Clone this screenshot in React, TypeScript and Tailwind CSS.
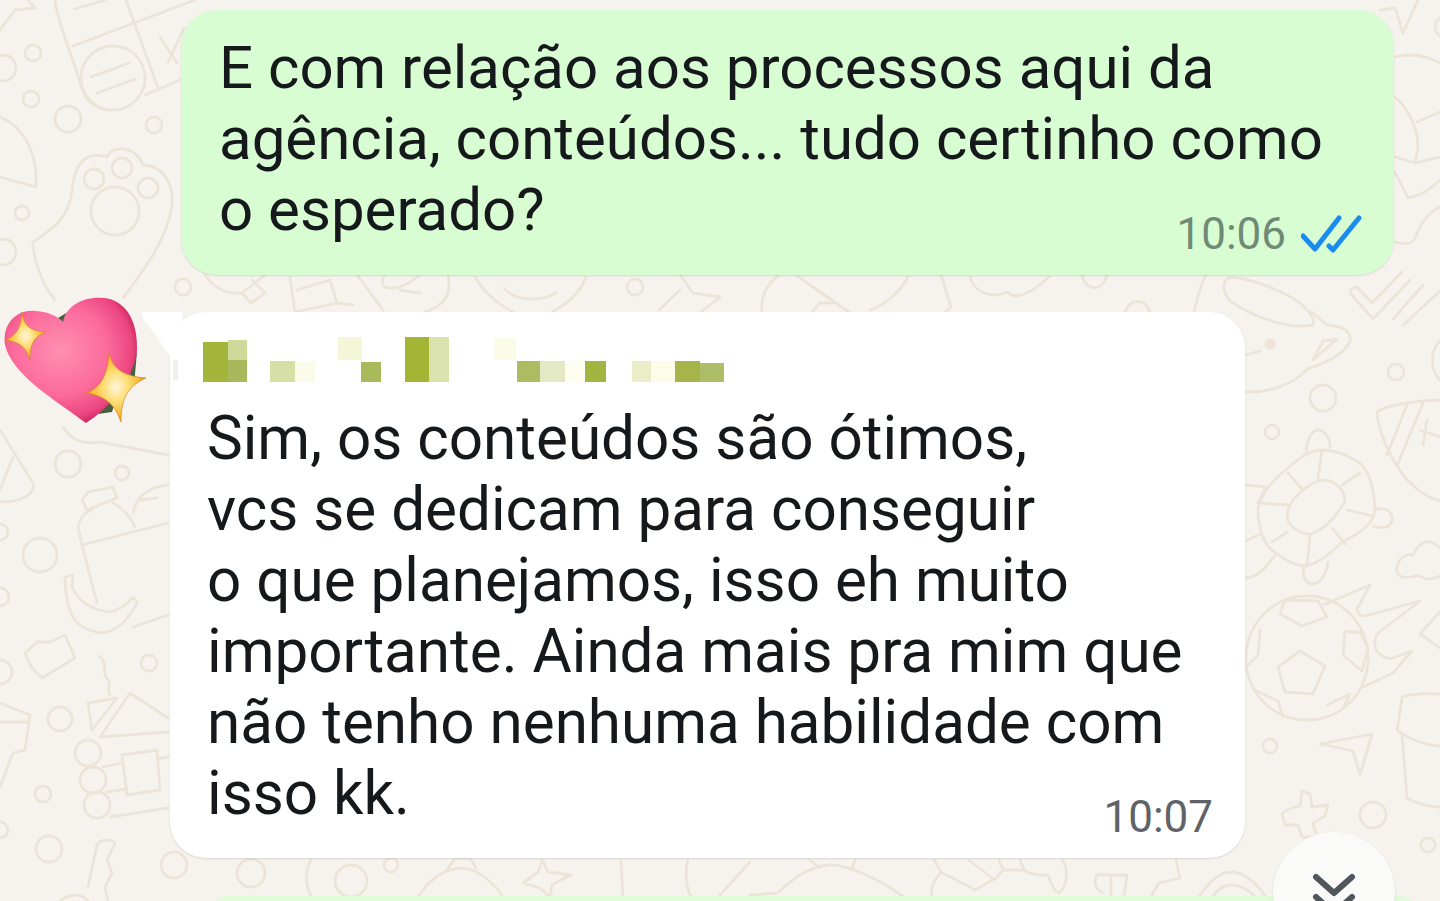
const nameBlocks = [
  [3, 23, 5, 20, '#f0f0ea'],
  [33, 5, 25, 40, '#a3b53b'],
  [58, 3, 19, 20, '#cfd99a'],
  [58, 23, 19, 22, '#a9b85a'],
  [100, 24, 25, 21, '#d5dfa6'],
  [125, 24, 20, 21, '#fafbe8'],
  [168, 0, 24, 23, '#f3f7d8'],
  [191, 25, 20, 20, '#a8ba5a'],
  [235, 0, 24, 45, '#a3b535'],
  [259, 0, 20, 45, '#dae2ae'],
  [324, 1, 22, 22, '#fbfce8'],
  [347, 24, 23, 21, '#adbc62'],
  [370, 24, 25, 21, '#e3e9c4'],
  [395, 24, 19, 21, '#fdfdf0'],
  [415, 24, 21, 21, '#a2b540'],
  [462, 24, 19, 21, '#e9eec8'],
  [481, 24, 24, 21, '#fcfce8'],
  [505, 24, 25, 21, '#a5b54a'],
  [530, 26, 24, 19, '#aebd68'],
] as const

const rings = [
  [33, 53, 8], [31, 99, 8], [68, 119, 13], [154, 125, 8], [22, 213, 7], [183, 287, 8], [3, 68, 13], [3, 252, 13],
  [68, 464, 13], [122, 473, 7], [40, 555, 17], [149, 663, 8], [60, 719, 12], [43, 794, 8], [49, 849, 13], [174, 865, 13],
  [0, 532, 8], [0, 597, 9], [0, 672, 12], [0, 830, 8], [1396, 372, 8], [1272, 432, 7], [1323, 398, 13], [1270, 746, 7],
  [1373, 815, 13], [1428, 845, 7], [1445, 27, 10], [113, 78, 32], [94, 179, 10], [122, 168, 10], [148, 188, 10],
  [115, 211, 24], [88, 753, 13], [93, 780, 13], [97, 805, 13], [635, 287, 8], [251, 873, 14], [351, 881, 16], [391, 865, 7],
]

const doodles = [
  // notebook, top left
  'M55 0C58 25 72 55 80 82C84 100 95 110 112 110M73 46L195 0M126 0L158 88M145 95L180 80M91 77L129 63M97 93L135 79M75 9L105 0M160 37L177 63M184 28L168 62',
  'M0 117C25 127 38 155 36 187L0 177M0 30L15 10L35 8L28 0',
  // paw
  'M33 242C33 258 42 285 55 300M33 242C55 228 70 215 72 190C74 165 85 150 107 157C112 145 135 145 143 165C160 165 174 180 172 205C168 240 140 275 123 298',
  // left edge, under the heart
  'M0 430L33 483C36 495 20 502 0 502M13 457L0 490M63 427C70 440 85 445 100 442L168 455',
  // bottle, bag, bread, banana
  'M82 500L88 492L113 487L117 498L87 510ZM78 527C80 518 85 512 92 510M113 503C122 508 130 516 135 527M78 527L82 545L97 603M82 545L168 523M133 513C136 498 147 487 168 485M140 500L157 498M168 615L133 627',
  'M65 577L73 575L72 587C78 600 90 610 110 612C120 610 128 603 133 597L137 602C133 613 125 620 123 623C112 632 105 633 100 633C88 630 80 627 75 620C68 612 65 590 65 577Z',
  // lego, smoke, house
  'M25 653L37 642L50 642L65 635L75 658L42 678L32 668Z',
  'M99 656C110 665 100 672 108 680C112 685 106 690 110 695',
  'M88 703L117 698L92 730ZM130 693L168 718M130 693L100 737M100 737L168 732M122 755L157 750L160 790L127 795ZM103 767L122 763M168 757L157 759M107 792L127 789M168 808L110 817',
  // ice cream, key
  'M0 703L30 715L25 750L13 753L0 787M0 722L27 722',
  'M88 887L97 845C100 838 115 840 115 843L107 860L112 873L105 887L108 901M60 901C70 893 82 893 88 901',
  // band under the first bubble
  'M205 275C215 290 230 295 242 293L265 275M242 293L251 303L265 293L252 280',
  'M290 277L295 312M297 290L330 280L337 303L353 305M295 312L337 303M357 275L383 310M385 275C375 290 395 295 420 275M400 290L420 293M448 275C452 295 445 305 425 312',
  'M475 277C485 295 500 305 513 312M586 277C580 295 565 305 552 312M504 288C515 302 545 302 556 292',
  'M680 275L693 293L720 297L701 312M680 290L659 310',
  'M779 275C765 285 760 300 762 312M796 275L850 313M908 277C900 292 885 305 870 310M812 312L820 303L833 303',
  'M941 275L951 307L945 312M970 277C975 295 995 298 1007 292C1015 300 1030 295 1049 277M1082 275C1085 292 1103 292 1107 275M1125 312C1130 298 1145 298 1150 312M1206 275C1200 285 1197 300 1194 312',
  // surfboard, cup, check
  'M1230 301C1255 318 1290 330 1313 325C1315 318 1310 312 1300 303C1285 292 1245 275 1228 278C1220 285 1225 295 1230 301',
  'M1245 392C1265 393 1295 385 1307 369C1320 365 1345 355 1350 341C1352 330 1340 326 1327 325L1312 312M1313 360L1337 339L1323 341ZM1245 355L1260 351',
  'M1351 294L1373 319L1410 280M1351 294C1348 290 1355 286 1358 288L1372 303L1402 272M1393 319L1423 285M1403 325L1440 291',
  // top right
  'M1380 10L1395 8L1403 33L1418 0M1395 57C1410 53 1425 55 1440 63M1395 97C1410 110 1418 130 1418 147L1415 163L1395 157M1417 122L1440 112M1415 163L1440 157M1395 172L1408 198C1420 196 1432 188 1440 180M1395 242C1405 245 1412 245 1415 238C1420 225 1428 212 1440 207M1440 341C1430 350 1430 370 1440 380',
  // hat
  'M1440 400C1415 401 1385 405 1377 412C1378 435 1400 490 1440 501M1423 403L1397 466M1407 405L1387 455M1420 430L1440 437M1427 420L1423 445',
  'M1440 548C1430 538 1420 540 1413 555C1400 552 1392 570 1400 576C1408 580 1415 575 1420 576C1428 582 1435 578 1440 576',
  // turtle
  'M1258 509C1258 530 1265 545 1273 551C1285 560 1295 566 1307 566C1320 562 1332 552 1340 544C1355 535 1375 525 1375 509C1374 490 1370 475 1363 466C1350 455 1335 450 1320 450C1305 452 1295 462 1287 469C1275 478 1262 490 1258 509Z',
  'M1287 516C1288 525 1298 534 1310 534C1320 532 1335 520 1345 501C1345 490 1335 480 1323 480C1310 482 1288 498 1287 516Z',
  'M1258 503L1288 505M1288 473L1302 489M1322 451L1318 478M1360 473L1342 485M1347 510L1373 516M1332 528L1345 544M1310 535L1307 566M1287 532L1272 542',
  'M1306 455C1306 440 1312 430 1318 430C1326 430 1331 440 1330 448M1377 509C1388 508 1392 512 1392 519C1392 526 1385 530 1373 526M1303 566C1303 578 1306 584 1312 584C1320 584 1326 575 1328 562M1246 485L1266 487L1258 503M1246 541L1260 534M1246 578C1258 578 1268 565 1275 555',
  // soccer ball, flames
  'M1246 658C1246 625 1272 596 1307 596C1342 596 1368 625 1368 658C1368 692 1342 720 1307 720C1272 720 1246 692 1246 658Z',
  'M1300 651L1325 666L1313 694L1285 692L1278 667ZM1280 614L1302 626L1327 617L1318 601L1285 600ZM1345 632L1343 655L1362 671L1368 648L1360 632ZM1260 630L1258 655L1247 666M1257 691L1278 701L1283 717M1327 705L1350 694L1343 708',
  'M1323 605L1370 585L1357 609C1358 615 1362 616 1365 616L1420 601L1377 634C1372 645 1375 655 1390 659L1412 651L1393 673L1363 687',
  // plane, cross
  'M1320 744L1372 734L1360 775L1353 751Z',
  'M1282 814C1285 810 1296 806 1300 806L1302 791L1310 794L1312 807L1328 805L1325 816L1313 823L1317 837L1302 837L1298 825L1285 825Z',
  // pot
  'M1440 694C1420 693 1402 695 1402 698L1397 730C1410 740 1425 745 1440 746M1402 734L1407 798C1415 803 1430 807 1440 807M1440 612L1420 634L1440 648',
  // band under the second bubble
  'M311 860C305 870 305 885 311 895M418 897C430 878 445 868 464 868C480 870 495 885 502 895M447 870L455 858L470 858L476 868',
  'M542 860L548 872L571 875L552 885L550 897L540 888L523 883L538 872ZM621 860L623 897M688 860C685 870 685 885 691 897M750 862L720 895',
  'M750 895L778 893C795 875 815 865 831 865C850 865 880 880 904 897M810 860L820 868M855 860L852 868',
  'M934 860L941 872C935 880 930 885 932 897M941 872L975 890L996 878L1003 870L1024 870C1030 875 1040 875 1048 875C1050 880 1052 890 1059 893C1066 888 1070 870 1062 860M969 860L992 878M999 860L1003 870M1020 860L1024 870',
  'M1127 875L1097 875C1094 880 1094 890 1104 893M1111 877L1111 897M1127 875L1124 897M1176 860L1180 878L1159 883L1152 895',
  'M1199 897C1210 880 1220 872 1231 872C1245 872 1258 885 1266 897M1213 897C1218 888 1225 885 1231 885C1240 885 1250 890 1255 897',
]

function Doodles() {
  return (
    <svg className="absolute inset-0" width="1440" height="901" fill="none" stroke="#ece4d9" strokeWidth="2.8" strokeLinecap="round" strokeLinejoin="round">
      {rings.map(([cx, cy, r]) => (
        <circle key={`${cx}-${cy}`} cx={cx} cy={cy} r={r} />
      ))}
      {doodles.map(d => (
        <path key={d} d={d} />
      ))}
      <circle cx="1270" cy="344" r="4" fill="#ece4d9" />
    </svg>
  )
}

function Heart() {
  return (
    <svg className="absolute left-0 top-[290px]" width="150" height="135" viewBox="0 290 150 135">
      <defs>
        <radialGradient id="heart" cx="0.42" cy="0.42" r="0.6">
          <stop offset="0" stopColor="#ff8fb3" />
          <stop offset="0.6" stopColor="#fb6a9b" />
          <stop offset="0.9" stopColor="#ec4580" />
          <stop offset="1" stopColor="#cf2a63" />
        </radialGradient>
        <radialGradient id="star" cx="0.5" cy="0.5" r="0.5">
          <stop offset="0" stopColor="#fff6dc" />
          <stop offset="0.4" stopColor="#ffdf7a" />
          <stop offset="0.8" stopColor="#f7b733" />
          <stop offset="1" stopColor="#dc8a1f" />
        </radialGradient>
      </defs>
      <path d="M58 318L68 312L72 332ZM128 368L137 352L134 385ZM98 414L118 392L112 412Z" fill="#44603c" />
      <path d="M86 423C55 400 12 375 5 345C2 322 18 309 36 311C48 312 58 316 63 322C66 305 85 296 104 298C125 300 138 320 137 350C135 378 110 408 86 423Z" fill="url(#heart)" />
      <path d="M22 312C24 326 30 331 46 332C33 337 30 345 30 360C26 347 20 342 5 340C17 336 21 327 22 312Z" fill="url(#star)" stroke="#cf8a2a" strokeWidth="0.7" />
      <path d="M109 352C112 368 122 376 146 378C128 386 121 398 121 422C115 405 106 396 86 393C101 388 108 374 109 352Z" fill="url(#star)" stroke="#cf8a2a" strokeWidth="0.7" />
    </svg>
  )
}

export default function App() {
  return (
    <div className="relative h-[901px] w-[1440px] overflow-hidden bg-[#f6f3ef] font-['Roboto',sans-serif] text-[#16191b]">
      <Doodles />

      <div className="relative flex flex-col pt-[10px]">
        {/* outgoing */}
        <div className="ml-[181px] flex h-[265px] w-[1213px] flex-col rounded-[36px] bg-[#d9fdd3] pl-[38px] pr-[31px] pt-[22px] shadow-[0_1px_2px_rgba(0,0,0,0.12)]">
          <p className="text-[60px] leading-[71px]">
            E com relação aos processos aqui da
            <br />
            agência, conteúdos... tudo certinho como
            <br />
            o esperado?
          </p>
          <div className="-mt-[37px] flex items-center gap-[15px] self-end">
            <span className="text-[44px] leading-[52px] text-[#6f8a75]">10:06</span>
            <svg width="62" height="40" viewBox="0 0 62 40" fill="none" stroke="#1a8cf0" strokeWidth="5" strokeLinecap="round" strokeLinejoin="round">
              <path d="M2 22L14 35L38 4M28 32L32 36L58 4" />
            </svg>
          </div>
        </div>

        {/* incoming */}
        <div className="relative ml-[170px] mt-[37px] flex h-[546px] w-[1075px] flex-col rounded-[36px] bg-white pl-[37px] pr-[32px] pt-[25px] shadow-[0_1px_2px_rgba(0,0,0,0.12)]">
          <div className="absolute left-[-28px] top-0 h-[44px] w-[40px] bg-white [clip-path:polygon(0_0,100%_0,100%_100%,70%_100%,0_10%)]" />
          <svg className="-ml-[37px]" width="600" height="46">
            {nameBlocks.map(([x, y, w, h, c]) => (
              <rect key={`${x}-${y}`} x={x} y={y} width={w} height={h} fill={c} />
            ))}
          </svg>
          <p className="mt-[20px] text-[60.2px] leading-[71px]">
            Sim, os conteúdos são ótimos,
            <br />
            vcs se dedicam para conseguir
            <br />
            o que planejamos, isso eh muito
            <br />
            importante. Ainda mais pra mim que
            <br />
            não tenho nenhuma habilidade com
            <br />
            isso kk.
          </p>
          <span className="-mt-[38px] self-end text-[44px] leading-[52px] text-[#5f6368]">10:07</span>
        </div>

        {/* next outgoing, cut off by the bottom of the screen */}
        <div className="ml-[209px] mt-[38px] h-[40px] w-[1210px] rounded-[36px] bg-[#dffbd8]" />
      </div>

      <Heart />

      {/* scroll to bottom */}
      <div className="absolute left-[1273px] top-[832px] flex h-[122px] w-[122px] flex-col items-center rounded-full bg-[#fafaf9] pt-[41px] shadow-[0_1px_3px_rgba(0,0,0,0.1)]">
        <svg width="44" height="30" viewBox="0 0 44 30" fill="none" stroke="#50565c" strokeWidth="6" strokeLinecap="round" strokeLinejoin="round">
          <path d="M4 4L22 20L40 4M4 24L22 40L40 24" />
        </svg>
      </div>
    </div>
  )
}
